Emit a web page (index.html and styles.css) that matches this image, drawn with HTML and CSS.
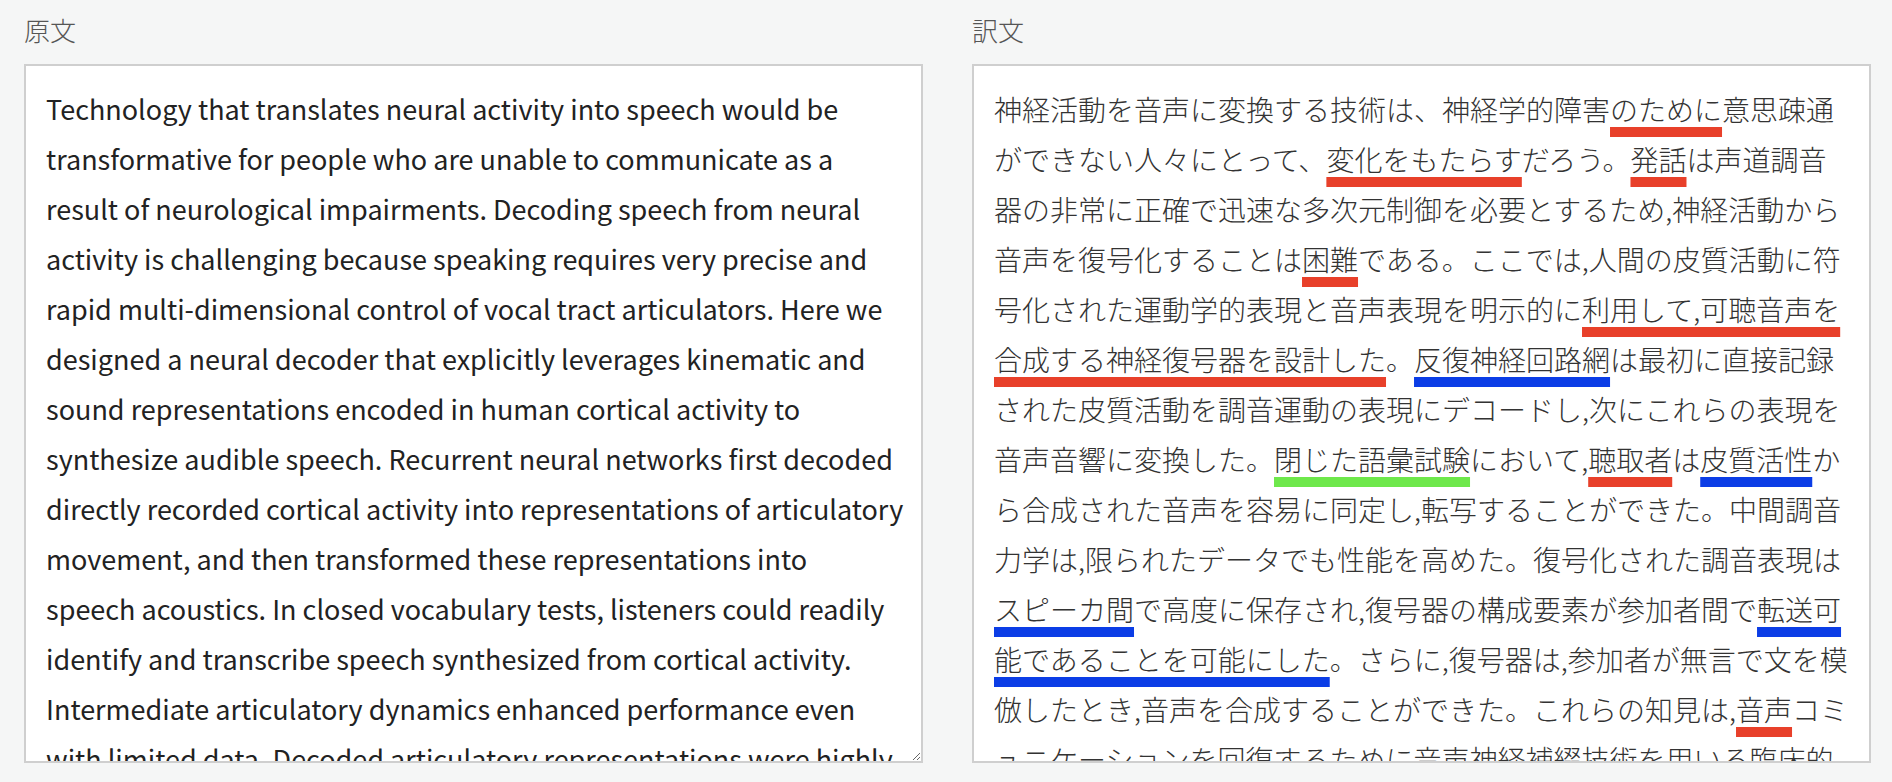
FILE: index.html
```html
<!DOCTYPE html>
<html lang="ja">
<head>
<meta charset="utf-8">
<title>原文 / 訳文</title>
<link rel="stylesheet" href="styles.css">
</head>
<body>
<main class="panes">
  <section class="pane">
    <h2 class="pane-label">原文</h2>
    <textarea class="box source" lang="en" spellcheck="false">Technology that translates neural activity into speech would be transformative for people who are unable to communicate as a result of neurological impairments. Decoding speech from neural activity is challenging because speaking requires very precise and rapid multi-dimensional control of vocal tract articulators. Here we designed a neural decoder that explicitly leverages kinematic and sound representations encoded in human cortical activity to synthesize audible speech. Recurrent neural networks first decoded directly recorded cortical activity into representations of articulatory movement, and then transformed these representations into
speech acoustics. In closed vocabulary tests, listeners could readily identify and transcribe speech synthesized from cortical activity. Intermediate articulatory dynamics enhanced performance even with limited data. Decoded articulatory representations were highly conserved across speakers, enabling a component of the decoder to be transferable across participants. Furthermore, the decoder could synthesize speech when a participant silently mimed sentences. These findings advance the clinical viability of using speech neuroprosthetic technology to restore spoken communication.</textarea>
  </section>
  <section class="pane">
    <h2 class="pane-label">訳文</h2>
    <div class="box target">神経活動を音声に変換する技術は、神経学的障害<span class="u red">のために</span>意思疎通ができない人々にとって、<span class="u red">変化をもたらす</span>だろう。<span class="u red">発話</span>は声道調音器の非常に正確で迅速な多次元制御を必要とするため,神経活動から音声を復号化することは<span class="u red">困難</span>である。ここでは,人間の皮質活動に符号化された運動学的表現と音声表現を明示的に<span class="u red">利用して,可聴音声を合成する神経復号器を設計した</span>。<span class="u blue">反復神経回路網</span>は最初に直接記録された皮質活動を調音運動の表現にデコードし,次にこれらの表現を音声音響に変換した。<span class="u green">閉じた語彙試験</span>において,<span class="u red">聴取者</span>は<span class="u blue">皮質活性</span>から合成された音声を容易に同定し,転写することができた。中間調音力学は,限られたデータでも性能を高めた。復号化された調音表現は<span class="u blue">スピーカ間</span>で高度に保存され,復号器の構成要素が参加者間で<span class="u blue">転送可能であることを可能にした</span>。さらに,復号器は,参加者が無言で文を模倣したとき,音声を合成することができた。これらの知見は,<span class="u red">音声</span>コミュニケーションを回復するために音声神経補綴技術を用いる臨床的実行可能性を前進させる。</div>
  </section>
</main>
</body>
</html>
```
FILE: styles.css
```css
html, body {
  margin: 0;
  padding: 0;
  background: #f5f6f6;
}

body {
  font-family: "Noto Sans CJK JP", "Noto Sans", sans-serif;
  height: 782px;
  overflow: hidden;
}

.panes {
  display: grid;
  grid-template-columns: 1fr 1fr;
  column-gap: 49px;
  padding: 0 21px 0 24px;
}

.pane {
  display: flex;
  flex-direction: column;
  min-width: 0;
}

.pane-label {
  margin: 12px 0 16px;
  height: 36px;
  line-height: 36px;
  font-size: 26px;
  font-weight: 300;
  color: #555;
  font-family: "Noto Sans CJK JP", sans-serif;
}

.box {
  box-sizing: border-box;
  display: block;
  width: 100%;
  height: 699px;
  margin: 0;
  padding: 18px 20px 18px 20px;
  border: 2px solid #cfcfcf;
  background: #fff;
  overflow: hidden;
  font-size: 28px;
  line-height: 50px;
}

.source {
  resize: both;
  font-family: "Noto Sans CJK JP", "Lato", sans-serif;
  font-size: 27px;
  font-weight: 400;
  padding-right: 14px;
  color: #222;
  outline: none;
}

.target {
  font-family: "Noto Sans CJK JP", sans-serif;
  font-weight: 300;
  color: #333;
  line-break: loose;
}

.u {
  text-decoration-line: underline;
  text-decoration-thickness: 10px;
  text-underline-offset: 6px;
  text-decoration-skip-ink: none;
}

.red { text-decoration-color: #e8402a; }
.blue { text-decoration-color: #0b3de6; }
.green { text-decoration-color: #6ee84b; }
```
